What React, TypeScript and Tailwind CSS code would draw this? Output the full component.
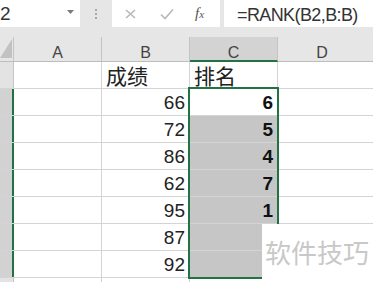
import React from "react";

const rows: { b: string; c: string }[] = [
  { b: "66", c: "6" },
  { b: "72", c: "5" },
  { b: "86", c: "4" },
  { b: "62", c: "7" },
  { b: "95", c: "1" },
  { b: "87", c: "" },
  { b: "92", c: "" },
];

export default function App() {
  return (
    <div className="relative w-[373px] h-[282px] overflow-hidden bg-white font-['Liberation_Sans','Noto_Sans_CJK_SC',sans-serif] text-[#222]">
      {/* formula bar */}
      <div className="flex h-[31px] bg-[#e6e6e6]">
        <div className="relative h-[27px] w-[80px] bg-white overflow-hidden">
          <span className="absolute left-[0px] top-[4px] text-[19px] leading-[20px] text-[#333]">2</span>
          <svg className="absolute left-[67px] top-[10px]" width="7" height="5" viewBox="0 0 7 5">
            <path d="M0 0 L7 0 L3.5 4 Z" fill="#7a7a7a" />
          </svg>
        </div>
        <div className="flex h-[27px] w-[32px] items-center justify-center">
          <div className="flex flex-col gap-[2px]">
            <div className="h-[2px] w-[2px] bg-[#a8a8a8]" />
            <div className="h-[2px] w-[2px] bg-[#a8a8a8]" />
            <div className="h-[2px] w-[2px] bg-[#a8a8a8]" />
          </div>
        </div>
        <div className="relative h-[27px] w-[108px] bg-white">
          <svg className="absolute left-[13px] top-[9px]" width="11" height="10" viewBox="0 0 11 10">
            <path d="M1 1 L10 9 M10 1 L1 9" stroke="#b8b8b8" strokeWidth="1.6" />
          </svg>
          <svg className="absolute left-[48px] top-[8px]" width="14" height="12" viewBox="0 0 14 12">
            <path d="M1 6.5 L5 10.5 L13 1.5" stroke="#b8b8b8" strokeWidth="1.6" fill="none" />
          </svg>
          <span className="absolute left-[83px] top-[4px] font-['Liberation_Serif',serif] italic text-[15px] leading-[18px] text-[#555]">
            f<span className="text-[11px]">x</span>
          </span>
        </div>
        <div className="w-[4px]" />
        <div className="h-[27px] flex-1 bg-white pl-[13px] pt-[4px]">
          <span className="text-[18px] leading-[20px] tracking-[-0.6px] text-[#333]">=RANK(B2,B:B)</span>
        </div>
      </div>

      {/* column header row */}
      <div className="flex h-[31px] bg-[#e6e6e6] border-b border-[#bdbdbd] text-[16px] text-[#444]">
        <div className="relative mt-[6px] w-[14px] border-r border-[#c4c4c4]">
          <svg className="absolute left-[0px] top-[1px]" width="12" height="20" viewBox="0 0 12 20">
            <path d="M12 1 L12 20 L0 20 Z" fill="#c2c2c2" />
          </svg>
        </div>
        <div className="mt-[6px] flex w-[88px] justify-center border-r border-[#c4c4c4] pt-[6px] leading-[20px]">A</div>
        <div className="mt-[6px] flex w-[88px] justify-center border-r border-[#c4c4c4] pt-[6px] leading-[20px]">B</div>
        <div className="mt-[6px] mb-[-1px] flex w-[88px] justify-center border-r border-[#c4c4c4] border-b-2 border-b-[#217346] bg-[#d3d3d3] pt-[6px] leading-[20px]">C</div>
        <div className="mt-[6px] flex w-[88px] justify-center pt-[6px] leading-[20px]">D</div>
      </div>

      {/* row 1 */}
      <div className="flex h-[27px] border-b border-[#d4d4d4]">
        <div className="w-[14px] bg-[#e3e3e3] border-r border-[#c4c4c4]" />
        <div className="w-[88px] border-r border-[#d4d4d4]" />
        <div className="w-[88px] border-r border-[#d4d4d4] pl-[4px] pt-[3px] text-[21px] leading-[24px]">成绩</div>
        <div className="w-[88px] border-r border-[#d4d4d4] pl-[4px] pt-[3px] text-[21px] leading-[24px]">排名</div>
        <div className="flex-1" />
      </div>

      {rows.map((r, i) => (
        <div key={i} className="flex h-[27px] border-b border-[#d4d4d4]">
          <div className="w-[14px] bg-[#d2d2d2] border-r-2 border-[#217346]" />
          <div className="w-[88px] border-r border-[#d4d4d4]" />
          <div className="w-[88px] border-r border-[#d4d4d4] pr-[4px] text-right text-[19px] leading-[27px] text-[#222]">{r.b}</div>
          <div className={`w-[88px] border-r border-[#d4d4d4] pr-[4px] text-right text-[19px] font-bold leading-[27px] text-[#111] ${i === 0 ? "bg-white" : "bg-[#c6c6c6]"}`}>
            {r.c}
          </div>
          <div className="flex-1" />
        </div>
      ))}

      <div className="flex h-[27px] border-b border-[#d4d4d4]">
        <div className="w-[14px] bg-[#e3e3e3] border-r border-[#c4c4c4]" />
        <div className="w-[88px] border-r border-[#d4d4d4]" />
        <div className="w-[88px] border-r border-[#d4d4d4]" />
        <div className="w-[88px] border-r border-[#d4d4d4]" />
        <div className="flex-1" />
      </div>

      {/* selection border */}
      <div className="absolute left-[188px] top-[87px] h-[192px] w-[91px] border-2 border-[#217346]" />

      {/* watermark */}
      <div className="absolute left-[262px] top-[224px] flex h-[58px] w-[111px] items-center bg-white pl-[3px] pt-[2px] text-[26px] leading-[30px] text-[#c8c8c8]">
        软件技巧
      </div>
    </div>
  );
}
